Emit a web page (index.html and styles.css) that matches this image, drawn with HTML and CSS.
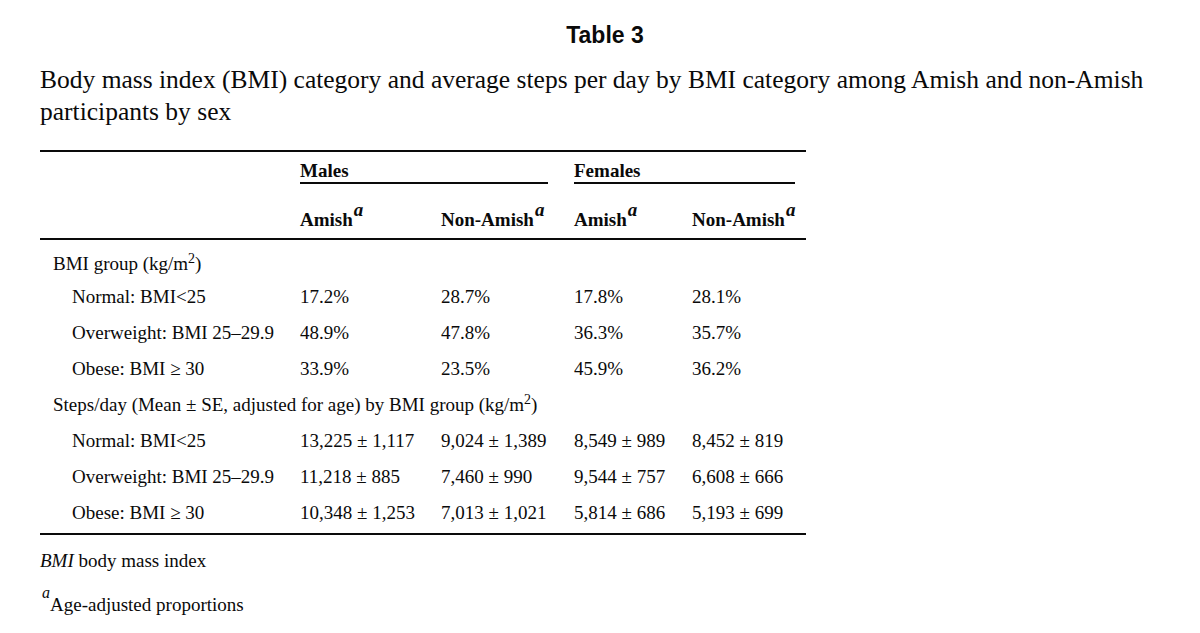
FILE: index.html
```html
<!DOCTYPE html>
<html>
<head>
<meta charset="utf-8">
<link rel="stylesheet" href="styles.css">
</head>
<body>
<div class="page">
  <h1 class="title">Table 3</h1>
  <p class="caption">Body mass index (BMI) category and average steps per day by BMI category among Amish and non-Amish participants by sex</p>
  <table class="data">
    <colgroup>
      <col class="c0"><col class="c1"><col class="c2"><col class="c3"><col class="c4">
    </colgroup>
    <thead>
      <tr class="group-row">
        <th></th>
        <th colspan="2" class="grp grp-m"><span class="grp-line">Males</span></th>
        <th colspan="2" class="grp grp-f"><span class="grp-line">Females</span></th>
      </tr>
      <tr class="sub-row">
        <th></th>
        <th>Amish<sup class="sa">a</sup></th>
        <th>Non-Amish<sup class="sa">a</sup></th>
        <th>Amish<sup class="sa">a</sup></th>
        <th>Non-Amish<sup class="sa">a</sup></th>
      </tr>
    </thead>
    <tbody>
      <tr class="first"><td class="sec" colspan="5">BMI group (kg/m<sup class="sq">2</sup>)</td></tr>
      <tr><td class="ind">Normal: BMI&lt;25</td><td>17.2%</td><td>28.7%</td><td>17.8%</td><td>28.1%</td></tr>
      <tr><td class="ind">Overweight: BMI 25–29.9</td><td>48.9%</td><td>47.8%</td><td>36.3%</td><td>35.7%</td></tr>
      <tr><td class="ind">Obese: BMI ≥ 30</td><td>33.9%</td><td>23.5%</td><td>45.9%</td><td>36.2%</td></tr>
      <tr><td class="sec" colspan="5">Steps/day (Mean ± SE, adjusted for age) by BMI group (kg/m<sup class="sq">2</sup>)</td></tr>
      <tr><td class="ind">Normal: BMI&lt;25</td><td>13,225 ± 1,117</td><td>9,024 ± 1,389</td><td>8,549 ± 989</td><td>8,452 ± 819</td></tr>
      <tr><td class="ind">Overweight: BMI 25–29.9</td><td>11,218 ± 885</td><td>7,460 ± 990</td><td>9,544 ± 757</td><td>6,608 ± 666</td></tr>
      <tr class="last"><td class="ind">Obese: BMI ≥ 30</td><td>10,348 ± 1,253</td><td>7,013 ± 1,021</td><td>5,814 ± 686</td><td>5,193 ± 699</td></tr>
    </tbody>
  </table>
  <p class="note"><i>BMI</i> body mass index</p>
  <p class="note note2"><sup class="na">a</sup>Age-adjusted proportions</p>
</div>
</body>
</html>
```

FILE: styles.css
```css
html, body {
  margin: 0;
  padding: 0;
  background: #ffffff;
}
body {
  color: #0a0a0a;
  font-family: "Liberation Serif", "Times New Roman", serif;
}
.page {
  padding: 0 0 0 40px;
}
.title {
  margin: 0 0 0 -30px;
  padding-top: 22px;
  text-align: center;
  font-family: "Liberation Sans", Arial, sans-serif;
  font-weight: bold;
  font-size: 23px;
  line-height: 26px;
}
.caption {
  margin: 16px 0 0 0;
  max-width: 1125px;
  font-size: 25.5px;
  line-height: 32px;
}
.data {
  margin-top: 22px;
  width: 766px;
  border-collapse: collapse;
  table-layout: fixed;
  font-size: 19px;
  border-top: 2px solid #0a0a0a;
  border-bottom: 2px solid #0a0a0a;
}
.c0 { width: 260px; }
.c1 { width: 141px; }
.c2 { width: 133px; }
.c3 { width: 118px; }
.c4 { width: 114px; }
.data th {
  text-align: left;
  font-weight: bold;
  padding: 0;
  line-height: 22px;
  white-space: nowrap;
}
.group-row th {
  padding-top: 8px;
}
.grp-line {
  display: block;
  border-bottom: 2px solid #0a0a0a;
}
.grp-m { padding-right: 26px !important; }
.grp-f { padding-right: 11px !important; }
.sub-row th {
  padding-top: 25px;
  padding-bottom: 7px;
  border-bottom: 2px solid #0a0a0a;
}
.sa {
  font-style: italic;
  font-size: 19px;
  line-height: 0;
  vertical-align: 10px;
  margin-left: 1px;
}
.sq {
  font-size: 14px;
  line-height: 0;
  vertical-align: 7px;
}
.data td {
  padding: 0;
  height: 36px;
  line-height: 36px;
  white-space: nowrap;
  vertical-align: top;
}
.data tr.first td {
  padding-top: 8px;
  height: 31px;
  line-height: 31px;
}
.data tr.last td {
  padding-bottom: 2px;
}
.sec {
  padding-left: 13px !important;
}
.ind {
  padding-left: 32px !important;
}
.note {
  margin: 14px 0 0 0;
  font-size: 19px;
  line-height: 24px;
}
.note2 {
  margin-top: 20px;
}
.na {
  font-style: italic;
  font-size: 16px;
  line-height: 0;
  vertical-align: 13px;
  margin-left: 2px;
}
```
